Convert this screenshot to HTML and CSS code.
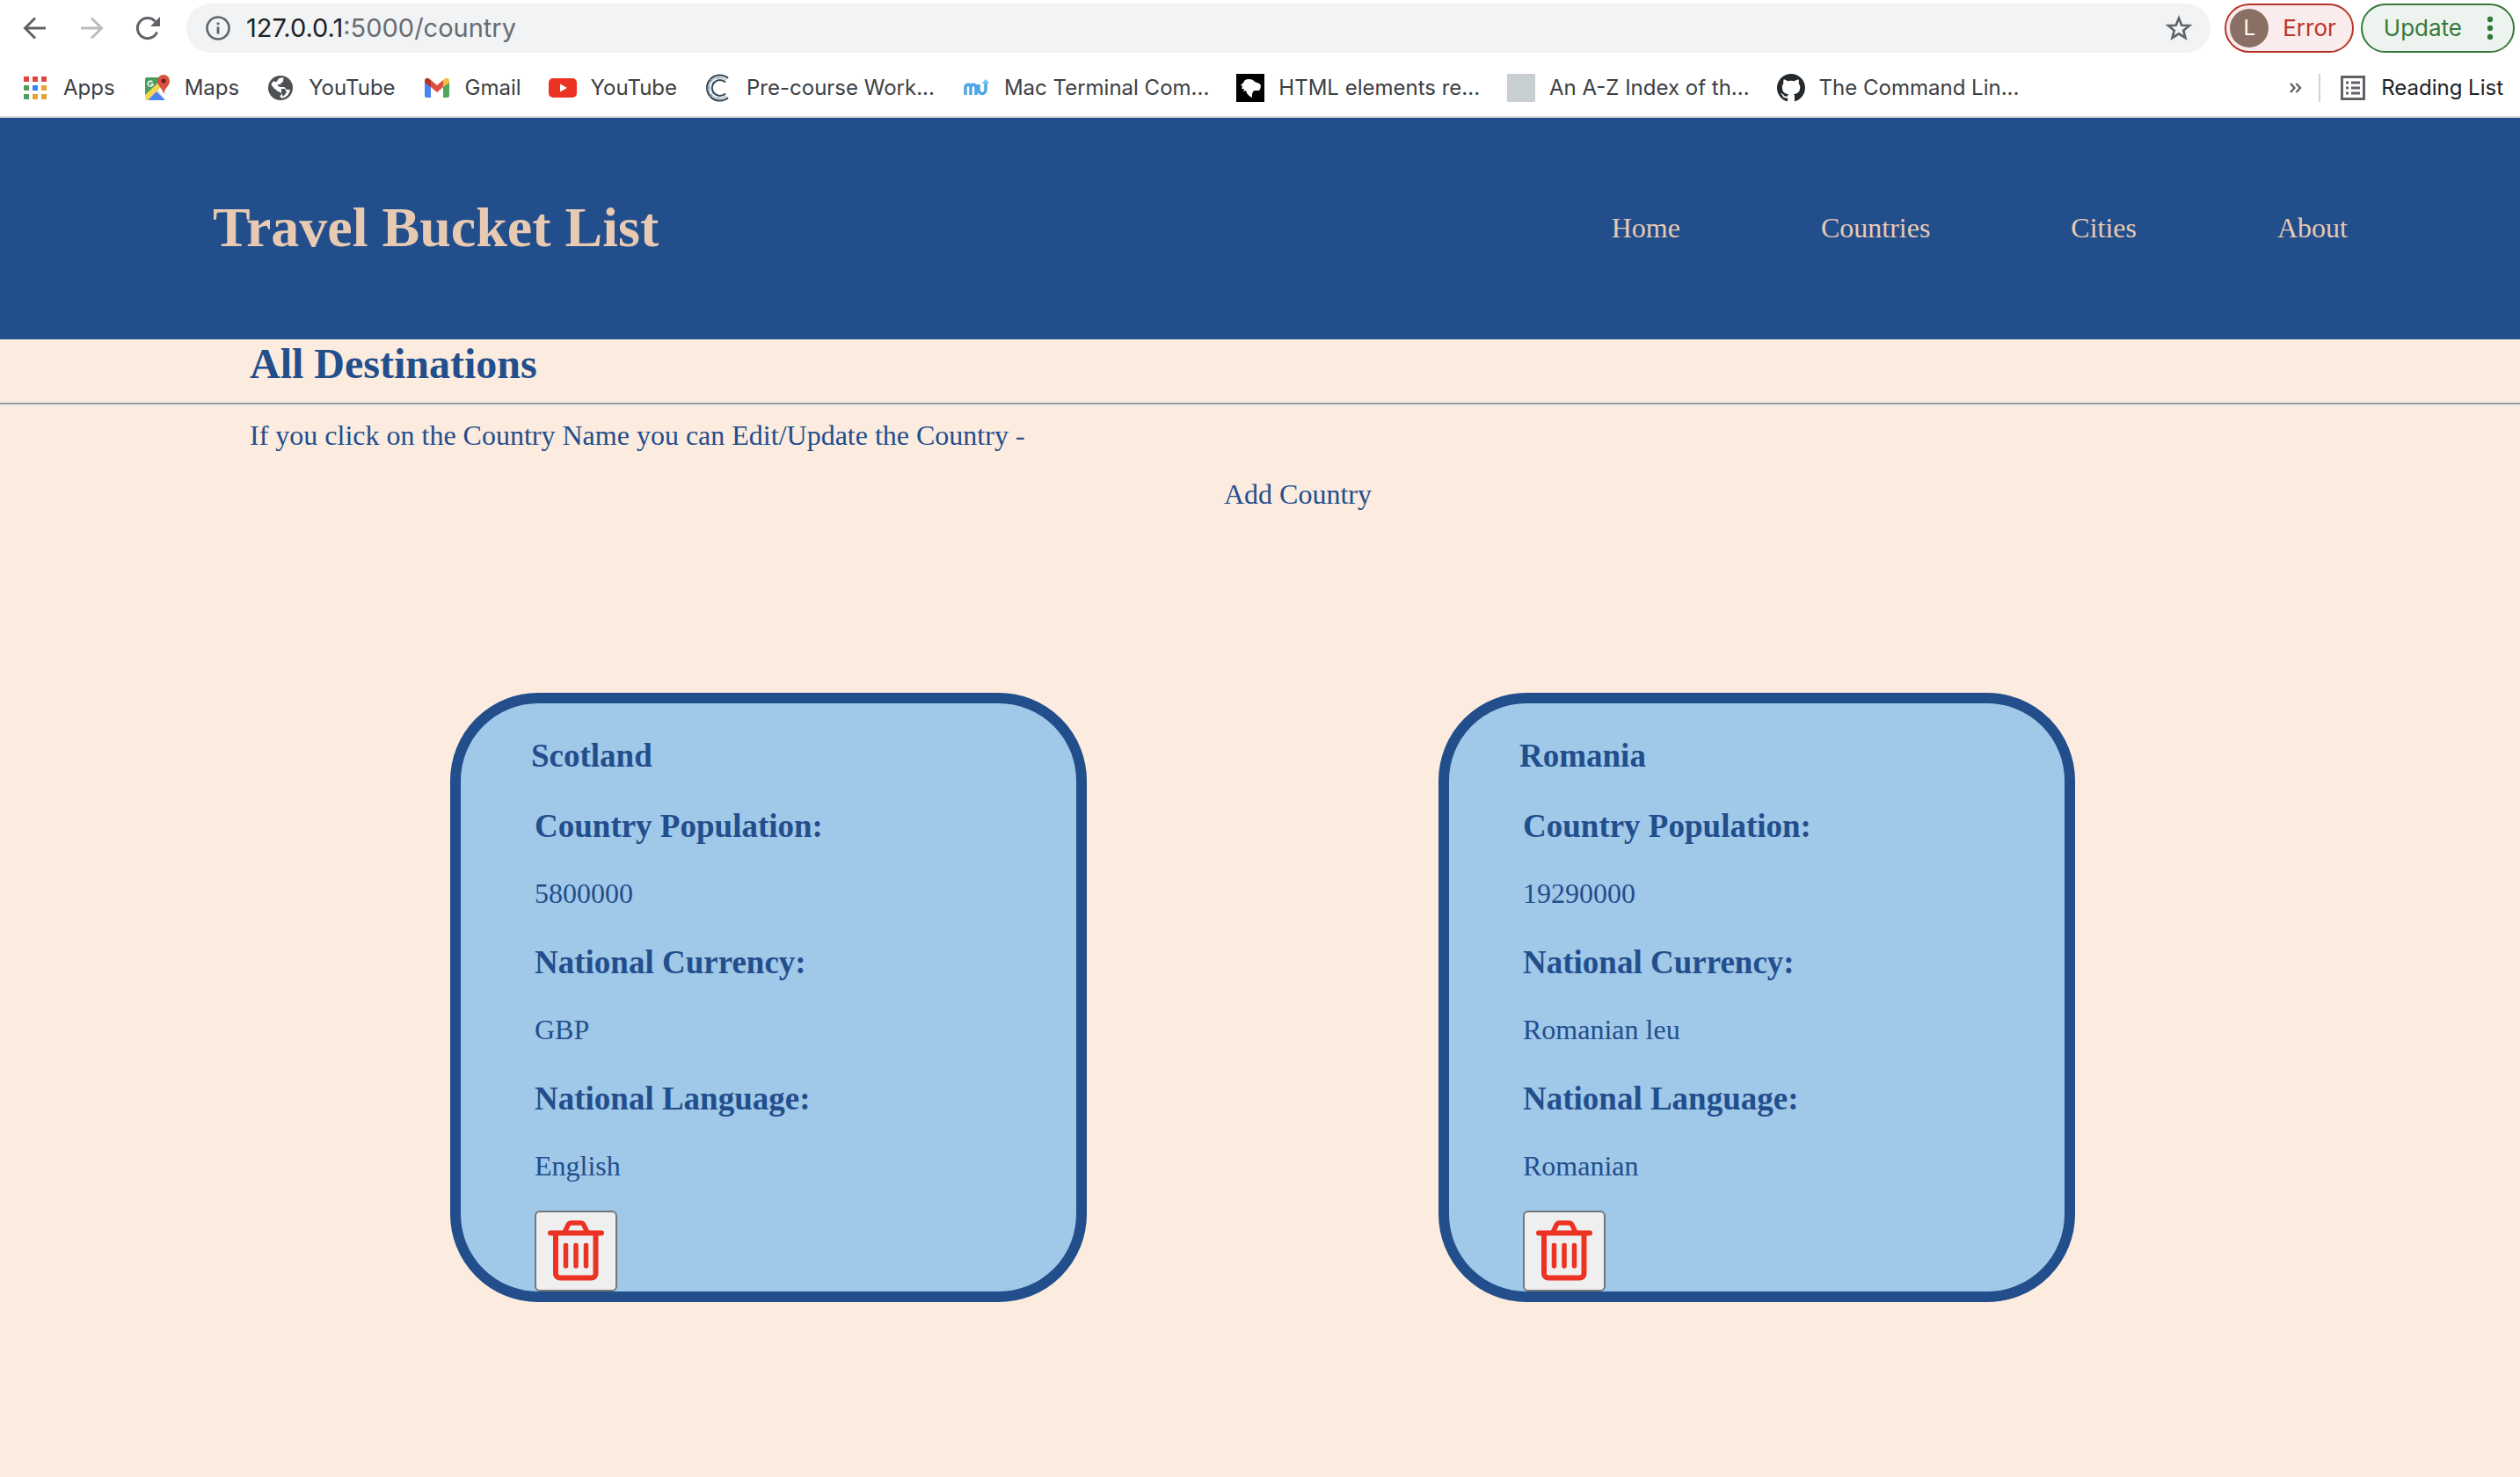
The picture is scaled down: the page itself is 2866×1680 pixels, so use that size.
FILE: index.html
```html
<!DOCTYPE html>
<html lang="en">
<head>
<meta charset="utf-8">
<title>Travel Bucket List</title>
<link rel="stylesheet" href="styles.css">
</head>
<body>
<div class="browser">
  <div class="toolbar">
    <button class="tool" aria-label="Back"><svg width="32" height="32" viewBox="0 0 32 32" fill="none" stroke="#5f6368" stroke-width="3"><path d="M28 16H5M16 4.500L4.500 16L16 27.500"/></svg></button>
    <button class="tool" aria-label="Forward"><svg width="32" height="32" viewBox="0 0 32 32" fill="none" stroke="#babcbe" stroke-width="3"><path d="M4 16H27M16 4.500L27.500 16L16 27.500"/></svg></button>
    <button class="tool" aria-label="Reload"><svg width="32" height="32" viewBox="0 0 32 32"><path d="M26.500 20.500A11.500 11.500 0 1 1 24.500 8.500" fill="none" stroke="#5f6368" stroke-width="3"/><path d="M30 3V14H19z" fill="#5f6368"/></svg></button>
    <div class="address">
      <svg width="32" height="32" viewBox="0 0 32 32"><circle cx="16" cy="16" r="12.500" fill="none" stroke="#5f6368" stroke-width="2.600"/><path d="M14.600 14.500h2.800v8h-2.800zM14.600 9.500h2.800v2.800h-2.800z" fill="#5f6368"/></svg>
      <span class="url"><span class="host">127.0.0.1</span>:5000/country</span>
      <button class="star" aria-label="Bookmark this page"><svg width="32" height="32" viewBox="0 0 32 32"><path d="M16 4.500L19.200 12.700L28 13.200L21.200 18.700L23.500 27.200L16 22.400L8.500 27.200L10.800 18.700L4 13.200L12.800 12.700z" fill="none" stroke="#5f6368" stroke-width="2.600"/></svg></button>
    </div>
    <button class="pill pill-error"><span class="avatar">L</span>Error</button>
    <button class="pill pill-update">Update<svg width="8" height="28" viewBox="0 0 8 28" fill="#37793d"><circle cx="4" cy="4" r="3.200"/><circle cx="4" cy="14" r="3.200"/><circle cx="4" cy="24" r="3.200"/></svg></button>
  </div>
  <div class="bookmarks">
    <a class="bookmark" href="#"><svg width="32" height="32" viewBox="0 0 32 32"><path d="M3 3h6v6H3zM13 3h6v6h-6zM23 3h6v6h-6z" fill="#e0483e"/><path d="M3 13h6v6H3zM3 23h6v6H3z" fill="#4f9d5d"/><path d="M13 13h6v6h-6z" fill="#3b83f0"/><path d="M23 13h6v6h-6zM13 23h6v6h-6zM23 23h6v6h-6z" fill="#e5a437"/></svg>Apps</a>
    <a class="bookmark" href="#"><svg width="32" height="32" viewBox="0 0 32 32"><path d="M5 4h21v24a2 2 0 0 1-2 2H5a2 2 0 0 1-2-2V6a2 2 0 0 1 2-2z" fill="#dfe1e4"/><path d="M5 4h18v4L3 27V6a2 2 0 0 1 2-2z" fill="#4a9e5c"/><path d="M3 24L19 9l3 5L6 30H5a2 2 0 0 1-2-2z" fill="#f7d74e"/><path d="M6 30l10-10 10 10z" fill="#4c84ef"/><path d="M18 18l2-2 6 8v6z" fill="#fff"/><path d="M11.500 9.300a3 3 0 1 0 .6 2.500H9.300" fill="none" stroke="#fff" stroke-width="1.400"/><path d="M24 1a7 7 0 0 0-7 7c0 6 6 8 7 15 1-7 7-9 7-15a7 7 0 0 0-7-7z" fill="#d8503f"/><circle cx="24" cy="8" r="2.500" fill="#6d2119"/></svg>Maps</a>
    <a class="bookmark" href="#"><svg width="32" height="32" viewBox="0 0 32 32"><circle cx="16" cy="16" r="14" fill="#4d5156"/><path d="M13 6.500c2-2 5-2.500 7-1.500-1 1-1 2-1 3 0 2-3 2-3 4h-3c-1 2 2 3 4 3h3c2 0 1 3 4 3l3 0c-1 5-4 9-9 9.500-2 0-3-1-2-3 2-1 1-3-1-4-2 0-3-2-5-3H5c-.5-4 1-8 4-9.500 0 1.500 3 2 4-1.500z" fill="#fff"/><path d="M5 12l5 6v8l-3-2c-3-3-4-8-2-12zM17 17h4l2 4-4 5-2-4z" fill="#4d5156"/></svg>YouTube</a>
    <a class="bookmark" href="#"><svg width="32" height="32" viewBox="0 0 32 32"><path d="M2 8l7 5v14H4a2 2 0 0 1-2-2z" fill="#4c84ef"/><path d="M23 13l7-5v17a2 2 0 0 1-2 2h-5z" fill="#4fa65b"/><path d="M9 7l7 6 7-6v8l-7 6-7-6z" fill="#dd4f41"/><path d="M2 10V8c0-3 3-4 5-2.500L9 7v8z" fill="#b5312a"/><path d="M30 10V8c0-3-3-4-5-2.500L23 7v8z" fill="#f3bd42"/></svg>Gmail</a>
    <a class="bookmark" href="#"><svg width="32" height="32" viewBox="0 0 32 32"><rect x="0" y="5" width="32" height="22" rx="5" fill="#eb3323"/><path d="M13 11.500v9l8-4.500z" fill="#fff"/></svg>YouTube</a>
    <a class="bookmark" href="#"><svg width="32" height="32" viewBox="0 0 32 32" fill="none" stroke="#2c4254"><path d="M27 5A14.500 14.500 0 1 0 27 27" stroke-width="2"/><path d="M24 9.500A9 9 0 1 0 24 22.500" stroke-width="2"/><path d="M25 7A12 12 0 1 0 25 25M3 16h6M16 2v5M16 25v5M6 6l4 4M6 26l4-4" stroke-width="1" stroke="#8a979f"/></svg>Pre-course Work...</a>
    <a class="bookmark" href="#"><svg width="32" height="32" viewBox="0 0 32 32" fill="none" stroke="#4fa8e4" stroke-width="3.500"><path d="M4 24V16c0-5 6-5 6 0v8M10 16c0-5 6-5 6 0v8M19 12v6c0 6 8 6 8 0V9"/><path d="M22.500 11L27 6l4.500 5z" fill="#6fc3f5" stroke="none"/></svg>Mac Terminal Com...</a>
    <a class="bookmark" href="#"><svg width="32" height="32" viewBox="0 0 32 32"><path d="M0 0h32v32H0z" fill="#000"/><path d="M10 7c4-2 9-1 11 2l5 2c3 1 2 6 0 8h-5c-3 1-3 4-3 8-4-2-6-4-7-8l-3 1 1-3-3 0 1-3-2-1 3-3z" fill="#fff"/></svg>HTML elements re...</a>
    <a class="bookmark" href="#"><svg width="32" height="32" viewBox="0 0 32 32"><rect width="32" height="32" rx="1" fill="#c7cfd2"/></svg>An A-Z Index of th...</a>
    <a class="bookmark" href="#"><svg width="32" height="32" viewBox="0 0 16 16"><path fill="#24292e" d="M8 0C3.580 0 0 3.580 0 8c0 3.540 2.290 6.530 5.470 7.590.4.070.55-.17.55-.38 0-.19-.01-.82-.01-1.490-2.010.37-2.530-.49-2.690-.94-.09-.23-.48-.94-.82-1.130-.28-.15-.68-.52-.01-.53.63-.01 1.080.58 1.230.82.72 1.210 1.870.87 2.330.66.07-.52.28-.87.51-1.070-1.780-.2-3.640-.89-3.640-3.950 0-.87.31-1.590.82-2.150-.08-.2-.36-1.020.08-2.120 0 0 .67-.21 2.200.82.64-.18 1.320-.27 2-.27s1.360.09 2 .27c1.530-1.040 2.200-.82 2.200-.82.44 1.100.16 1.920.08 2.120.51.56.82 1.270.82 2.150 0 3.070-1.870 3.750-3.650 3.950.29.25.54.73.54 1.480 0 1.070-.01 1.930-.01 2.200 0 .21.15.46.55.38A8.010 8.010 0 0 0 16 8c0-4.420-3.580-8-8-8z"/></svg>The Command Lin...</a>
    <button class="more" aria-label="More bookmarks"><svg width="14" height="14" viewBox="0 0 14 14" fill="none" stroke="#5f6368" stroke-width="2.400"><path d="M1 2l4.500 5L1 12M7.500 2L12 7l-4.500 5"/></svg></button>
    <a class="bookmark reading" href="#"><svg width="32" height="32" viewBox="0 0 32 32"><path d="M3.500 3.500h25v25h-25z" fill="none" stroke="#5f6368" stroke-width="3"/><path d="M8 8.500h3v3H8zM14 8.500h10v3H14zM8 14.500h3v3H8zM14 14.500h10v3H14zM8 20.500h3v3H8zM14 20.500h10v3H14z" fill="#5f6368"/></svg>Reading List</a>
  </div>
</div>
<header class="site-header">
  <h1 class="site-title">Travel Bucket List</h1>
  <nav class="site-nav">
    <a href="#">Home</a>
    <a href="#">Countries</a>
    <a href="#">Cities</a>
    <a href="#">About</a>
  </nav>
</header>
<main>
  <h2 class="page-title">All Destinations</h2>
  <hr class="rule">
  <p class="intro">If you click on the Country Name you can Edit/Update the Country -</p>
  <p class="add"><a href="#">Add Country</a></p>
  <div class="cards">
    <article class="card">
      <h3 class="name"><a href="#">Scotland</a></h3>
      <h3>Country Population:</h3>
      <p>5800000</p>
      <h3>National Currency:</h3>
      <p>GBP</p>
      <h3>National Language:</h3>
      <p>English</p>
      <button class="delete" aria-label="Delete Scotland"><svg width="64" height="72" viewBox="0 0 64 72" fill="none" stroke="#ec3323"><path d="M3 15.500h58" stroke-width="6" stroke-linecap="round"/><path d="M19 15l4-8.500a4 4 0 0 1 3.500-2.500h11a4 4 0 0 1 3.500 2.500l4 8.500" stroke-width="5.500"/><path d="M9 16v45.500a5 5 0 0 0 5 5h35.500a5 5 0 0 0 5-5V16" stroke-width="6"/><path d="M20.500 29.500v23.500M32 29.500v23.500M43.500 29.500v23.500" stroke-width="5.500" stroke-linecap="round"/></svg></button>
    </article>
    <article class="card">
      <h3 class="name"><a href="#">Romania</a></h3>
      <h3>Country Population:</h3>
      <p>19290000</p>
      <h3>National Currency:</h3>
      <p>Romanian leu</p>
      <h3>National Language:</h3>
      <p>Romanian</p>
      <button class="delete" aria-label="Delete Romania"><svg width="64" height="72" viewBox="0 0 64 72" fill="none" stroke="#ec3323"><path d="M3 15.500h58" stroke-width="6" stroke-linecap="round"/><path d="M19 15l4-8.500a4 4 0 0 1 3.500-2.500h11a4 4 0 0 1 3.500 2.500l4 8.500" stroke-width="5.500"/><path d="M9 16v45.500a5 5 0 0 0 5 5h35.500a5 5 0 0 0 5-5V16" stroke-width="6"/><path d="M20.500 29.500v23.500M32 29.500v23.500M43.500 29.500v23.500" stroke-width="5.500" stroke-linecap="round"/></svg></button>
    </article>
  </div>
</main>
</body>
</html>
```
FILE: styles.css
```css
* { box-sizing: border-box; }

body {
  margin: 0;
  background: #fcebdf;
  color: #224e8c;
  font: 32px/37px "Liberation Serif", "Times New Roman", serif;
}

h1, h2, h3, p { margin: 0; }

a { color: inherit; text-decoration: none; }

button { font: inherit; cursor: pointer; }

svg { display: block; flex: none; }

/* Browser bars */
.browser {
  background: #fff;
  border-bottom: 2px solid #dcdcdc;
  color: #3c4043;
  font: 24px/32px Inter, "Liberation Sans", sans-serif;
}

.toolbar {
  display: flex;
  align-items: center;
  padding: 4px 6px 4px 24px;
}

.tool, .star, .more {
  padding: 0;
  border: 0;
  background: none;
}

.tool { margin-right: 32px; }

.address {
  flex: 1;
  display: flex;
  align-items: center;
  height: 56px;
  margin: 0 16px 0 -4px;
  padding: 0 20px;
  border-radius: 28px;
  background: #f1f3f4;
  font-size: 29px;
  color: #696c70;
}

.url { margin-left: 16px; }

.host { color: #202124; }

.star { margin-left: auto; }

.pill {
  display: flex;
  align-items: center;
  height: 56px;
  border: 2px solid;
  border-radius: 28px;
  font-size: 26px;
}

.pill-error {
  gap: 16px;
  padding: 0 18px 0 4px;
  margin-right: 8px;
  background: #faeced;
  color: #b93529;
}

.avatar {
  width: 44px;
  height: 44px;
  border-radius: 50%;
  background: #8a6f64;
  color: #fff;
  font-size: 24px;
  line-height: 44px;
}

.pill-update {
  gap: 28px;
  padding: 0 22px 0 24px;
  background: #edf4ef;
  color: #37793d;
}

.bookmarks {
  display: flex;
  align-items: center;
  gap: 31px;
  height: 68px;
  padding: 3px 19px 0 24px;
  white-space: nowrap;
}

.bookmark {
  display: flex;
  align-items: center;
  gap: 16px;
}

.more { margin-left: auto; margin-right: -12px; }

.reading {
  padding-left: 21px;
  border-left: 2px solid #cfd1d4;
  color: #202124;
}

/* Site header */
.site-header {
  display: flex;
  justify-content: space-between;
  align-items: center;
  padding: 88px 196px 90px 242px;
  background: #224e8c;
  color: #e8cab3;
}

.site-title { font-size: 64px; line-height: 74px; }

.site-nav { display: flex; gap: 160px; }

/* Country list */
.page-title {
  padding: 0 284px;
  font-size: 48px;
  line-height: 56px;
}

.rule {
  margin: 16px 0 15px;
  border: solid;
  border-width: 2px 0;
  border-color: #9a9a9a #eee #eee;
}

.intro { padding: 0 284px; }

.add {
  margin-top: 30px;
  padding-left: 86px;
  text-align: center;
}

.cards {
  display: grid;
  grid-template-columns: 1fr 1fr;
  gap: 400px;
  max-width: 1854px;
  margin: 207px auto;
  padding-left: 6px;
}

.card {
  padding: 38px 84px 0;
  border: 12px solid #224e8c;
  border-radius: 100px;
  background: #a0c8e8;
}

.card h3 {
  margin-bottom: 37px;
  font-size: 37px;
  line-height: 43px;
}

.card p { margin-bottom: 38px; }

.card p:last-of-type { margin-bottom: 32px; }

.card .name { margin-left: -4px; }

.delete {
  display: block;
  padding: 8px 13px;
  border: 2px solid #767676;
  border-radius: 6px;
  background: #efefef;
}
```
